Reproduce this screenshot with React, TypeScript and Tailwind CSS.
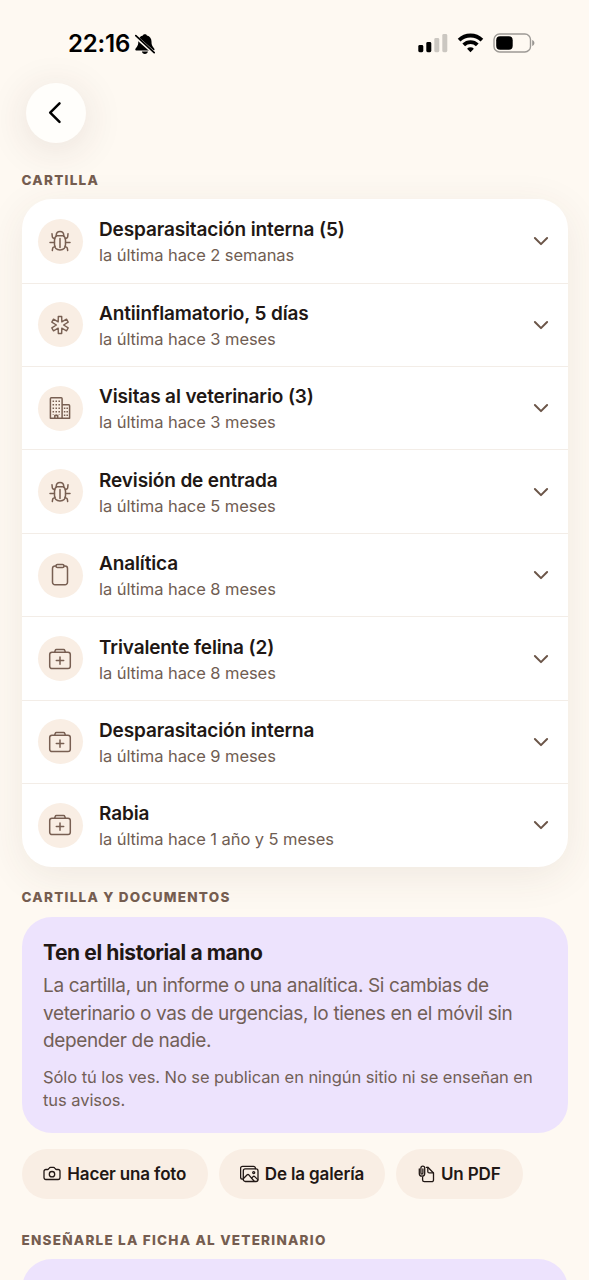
import type { ReactNode } from "react";

const stroke = {
  fill: "none",
  stroke: "currentColor",
  strokeLinecap: "round",
  strokeLinejoin: "round",
} as const;

function Bug() {
  return (
    <svg className="size-6" viewBox="0 0 24 24" strokeWidth="1.5" {...stroke}>
      <path d="M8.200 6.700C8.200 4.200 9.600 2.600 12 2.600s3.800 1.600 3.800 4.100" />
      <path d="M9 6.700h6q2.500 1.300 2.500 4.200v4.600c0 3.400-2.200 5.400-5.500 5.400s-5.500-2-5.500-5.400v-4.600q0-2.900 2.500-4.200Z" />
      <path d="M12 9.400v9M2 13.500h4.400M17.600 13.500h4.400M4 4.800l.3 3q.1.900.9 1.200l1.600.6M20 4.800l-.3 3q-.1.900-.9 1.200l-1.600.6M4.300 21.500l.4-2.300q.2-.8.900-1.100l1.500-.8M19.700 21.500l-.4-2.300q-.2-.8-.9-1.100l-1.500-.8" />
    </svg>
  );
}

function Asterisk() {
  return (
    <svg className="size-6" viewBox="-12 -12 24 24" strokeWidth="1.400" {...stroke}>
      <path d="M-1.700-8.500H1.700L1.800-3.120 6.500-5.800 8.200-2.800 3.600 0 8.200 2.800 6.500 5.800 1.800 3.120 1.700 8.500H-1.700L-1.800 3.120-6.500 5.800-8.200 2.800-3.600 0-8.200-2.800-6.500-5.800-1.800-3.120Z" />
    </svg>
  );
}

function Building() {
  return (
    <svg className="size-6" viewBox="0 0 24 24" strokeWidth="1.500" {...stroke}>
      <path d="M2.400 22.200V2.700q0-.9.900-.9h9.900q.9 0 .9.900v19.500ZM14.100 8.800h6.600q.9 0 .9.900v12.500h-7.500M6.800 22v-2.600h2.900V22" />
      <path
        strokeWidth="1.500"
        strokeLinecap="butt"
        strokeDasharray="1.500 2"
        d="M5.300 4.500v14.500M8.250 4.500v14.500M11.200 4.500v14.500M16.600 11.500v9.500M19.200 11.500v9.500"
      />
    </svg>
  );
}

function Clipboard() {
  return (
    <svg className="size-6" viewBox="0 0 24 24" strokeWidth="1.500" {...stroke}>
      <path d="M8.200 2.900H7A2.500 2.500 0 0 0 4.500 5.400v13.900A2.500 2.500 0 0 0 7 21.800h10a2.500 2.500 0 0 0 2.500-2.500V5.400A2.500 2.500 0 0 0 17 2.900h-1.200" />
      <rect x="8" y="1.600" width="8" height="3" rx="1.400" />
    </svg>
  );
}

function Medkit() {
  return (
    <svg className="size-6" viewBox="0 0 24 24" strokeWidth="1.500" {...stroke}>
      <rect x="1.700" y="5.300" width="20.600" height="16.300" rx="2.300" />
      <path d="M6.700 5.200l.5-1.700q.3-.9 1.200-.9h7.200q.9 0 1.200.9l.5 1.700M12 9.900v7.400M8.300 13.600h7.400" />
    </svg>
  );
}

function Camera() {
  return (
    <svg className="h-[16px] w-[18px]" viewBox="0 0 18 16" strokeWidth="1.300" {...stroke}>
      <path d="M2.900 3.500h1.700q.5 0 .8-.4l.8-1q.5-.7 1.300-.7h3q.8 0 1.300.7l.8 1q.3.400.8.400h1.700a1.900 1.900 0 0 1 1.900 1.900v6.200a1.900 1.900 0 0 1-1.900 1.900H2.900A1.900 1.900 0 0 1 1 11.600V5.400a1.900 1.900 0 0 1 1.900-1.900Z" />
      <circle cx="9" cy="8.200" r="2.700" />
    </svg>
  );
}

function Gallery() {
  return (
    <svg className="h-[18px] w-[19px]" viewBox="0.5 0 19 18" strokeWidth="1.300" {...stroke}>
      <path d="M3.600 14.200H3A1.900 1.900 0 0 1 1.100 12.300V3.200A1.900 1.900 0 0 1 3 1.300h11a1.900 1.900 0 0 1 1.900 1.900v.5" />
      <rect x="3.800" y="3.900" width="14.700" height="12.600" rx="2" />
      <path d="M4 13.500l3.700-3.700q.8-.7 1.600 0l5.200 6.200M12 13.200l1.600-1.600q.8-.7 1.600 0l3.100 3" />
      <circle cx="14.200" cy="7.600" r="1" />
    </svg>
  );
}

function PaperclipDoc() {
  return (
    <svg className="h-[18px] w-[17px]" viewBox="0 0 17 18" strokeWidth="1.300" {...stroke}>
      <path d="M4.600 12.200v2.700a1.800 1.800 0 0 0 1.800 1.800h7.300a1.800 1.800 0 0 0 1.800-1.800V8L9.900 2.300H8.300" />
      <path d="M9.800 2.500v3.900q0 1.500 1.500 1.500h4" />
      <path d="M1.300 4v4.400a2.700 2.700 0 0 0 5.400 0V3.100a1.900 1.900 0 0 0-3.800 0v5a1 1 0 0 0 2 0V4" />
    </svg>
  );
}

function Chevron() {
  return (
    <svg className="h-[10px] w-[16px]" viewBox="0 0 16 10" strokeWidth="2" {...stroke}>
      <path d="M1.900 2 8 8.100 14.100 2" />
    </svg>
  );
}

function StatusBar() {
  return (
    <div className="flex h-[82.500px] items-start justify-between pl-[68px] pr-[53px] pt-[32px] text-black">
      <div className="flex items-center gap-[4px]">
        <span className="text-[24px] font-semibold leading-[24px] tracking-[-0.150px]">22:16</span>
        <svg className="h-[22px] w-[22px]" viewBox="0 0 22 22">
          <path
            fill="currentColor"
            d="M10.900 1.300c-1 0-1.800.5-2 1.200C5.900 3.300 4.300 5.600 4.300 8.500c0 3.400-.6 4.300-1.900 5.900-.9 1-1.100 1.400-1.100 2 0 .7.500 1.100 1.300 1.100h16.600c.8 0 1.300-.4 1.300-1.100 0-.6-.2-1-1.100-2-1.300-1.600-1.900-2.500-1.900-5.900 0-2.900-1.600-5.200-4.600-6-.2-.7-1-1.200-2-1.200ZM7.900 18.600c.2 1.400 1.400 2.500 3 2.500s2.800-1.100 3-2.500Z"
          />
          <path d="M1.500 3.500 20 20" stroke="#fef9f2" strokeWidth="3.600" />
          <path d="M1.800 2.700 20.200 19.700" stroke="currentColor" strokeWidth="1.700" strokeLinecap="round" />
        </svg>
      </div>
      <div className="flex items-center pt-px">
        <svg className="h-[20px] w-[30px]" viewBox="0 0 30 20" fill="currentColor">
          <rect x="0.300" y="12" width="5" height="7.200" rx="1.400" />
          <rect x="8.300" y="9" width="5" height="10.200" rx="1.400" />
          <rect x="16.300" y="5" width="5" height="14.200" rx="1.400" opacity="0.200" />
          <rect x="24.300" y="1" width="5" height="18.200" rx="1.400" opacity="0.200" />
        </svg>
        <svg className="ml-[9px] h-[20px] w-[27px]" viewBox="0 0 27 20" fill="none" stroke="currentColor" strokeWidth="3.800">
          <path d="M2.100 7.200a16.200 16.200 0 0 1 22.800 0" />
          <path d="M6.700 11.900a9.600 9.600 0 0 1 13.600 0" />
          <path d="M13.500 19.200l-3.400-3.500a4.800 4.800 0 0 1 6.800 0Z" fill="currentColor" stroke="none" />
        </svg>
        <svg className="ml-[9px] h-[20px] w-[43px]" viewBox="0 0 43 20">
          <rect x="1" y="1" width="36.500" height="18" rx="5.600" fill="none" stroke="#000" strokeOpacity="0.380" strokeWidth="1.400" />
          <rect x="3.200" y="3.300" width="16.500" height="13.400" rx="3.900" fill="#000" />
          <path d="M39.200 7v6c1.400-.5 2.200-1.600 2.200-3s-.8-2.500-2.200-3Z" fill="#000" fillOpacity="0.400" />
        </svg>
      </div>
    </div>
  );
}

type Entry = { icon: ReactNode; title: string; detail: string };

const entries: Entry[] = [
  { icon: <Bug />, title: "Desparasitación interna (5)", detail: "la última hace 2 semanas" },
  { icon: <Asterisk />, title: "Antiinflamatorio, 5 días", detail: "la última hace 3 meses" },
  { icon: <Building />, title: "Visitas al veterinario (3)", detail: "la última hace 3 meses" },
  { icon: <Bug />, title: "Revisión de entrada", detail: "la última hace 5 meses" },
  { icon: <Clipboard />, title: "Analítica", detail: "la última hace 8 meses" },
  { icon: <Medkit />, title: "Trivalente felina (2)", detail: "la última hace 8 meses" },
  { icon: <Medkit />, title: "Desparasitación interna", detail: "la última hace 9 meses" },
  { icon: <Medkit />, title: "Rabia", detail: "la última hace 1 año y 5 meses" },
];

function EntryRow({ icon, title, detail }: Entry) {
  return (
    <li className="flex items-center border-t border-[#f3ede7] pl-[16px] pr-[18.500px] first:border-transparent">
      <span className="flex size-[45px] shrink-0 items-center justify-center rounded-full bg-[#f9eee4] text-[#785f52]">
        {icon}
      </span>
      <div className="ml-[16.500px] flex-1 pt-[3px]">
        <p className="whitespace-nowrap text-[19px] font-semibold leading-[26px] tracking-[-0.130px] text-[#211714]">{title}</p>
        <p className="whitespace-nowrap text-[16.500px] leading-[25px] tracking-[-0.070px] text-[#705d52]">{detail}</p>
      </div>
      <span className="text-[#6b5548]">
        <Chevron />
      </span>
    </li>
  );
}

function SectionLabel({ children }: { children: ReactNode }) {
  return (
    <h2 className="whitespace-nowrap text-[13.500px] font-extrabold leading-[18px] tracking-[1.240px] text-[#755d50]">{children}</h2>
  );
}

function PillButton({ icon, label, size }: { icon: ReactNode; label: string; size: string }) {
  return (
    <button className={`flex h-[50px] items-center justify-center gap-[6px] rounded-full bg-[#f9eee4] text-[#211714] ${size}`}>
      {icon}
      <span className="whitespace-nowrap text-[17px] font-semibold leading-[22px] tracking-[-0.140px]">{label}</span>
    </button>
  );
}

export default function App() {
  return (
    <div className="flex h-[1280px] w-[589px] flex-col overflow-hidden bg-[#fef9f2] font-['Inter','Liberation_Sans',sans-serif]">
      <header className="relative z-10 h-[155px] shrink-0">
        <StatusBar />
        <button
          aria-label="Atrás"
          className="ml-[26px] flex size-[60px] items-center justify-center rounded-full bg-[#fffefb] text-black shadow-[0_6px_40px_rgba(70,45,40,0.120)]"
        >
          <svg className="h-[24px] w-[16px]" viewBox="0 0 16 24" strokeWidth="2.500" {...stroke}>
            <path d="M11.500 2.300 2.200 11.600 11.500 20.900" />
          </svg>
        </button>
      </header>

      <main className="flex flex-1 flex-col overflow-hidden px-[21.500px] pt-[16px]">
        <SectionLabel>CARTILLA</SectionLabel>
        <ul className="mt-[10.100px] grid h-[667.500px] shrink-0 grid-rows-8 rounded-[30px] bg-white shadow-[0_9px_40px_rgba(80,60,45,0.085)]">
          {entries.map((entry) => (
            <EntryRow key={entry.title} {...entry} />
          ))}
        </ul>

        <div className="mt-[21.500px]">
          <SectionLabel>CARTILLA Y DOCUMENTOS</SectionLabel>
        </div>
        <section className="mt-[11px] h-[215.500px] shrink-0 rounded-[30px] bg-[#ede3fd] px-[21.500px] pt-[22.500px]">
          <h3 className="text-[21px] font-bold leading-[26px] tracking-[-0.400px] text-[#211714]">Ten el historial a mano</h3>
          <p className="mt-[6.300px] whitespace-nowrap text-[19px] leading-[27.700px] tracking-[-0.360px] text-[#725f57]">
            La cartilla, un informe o una analítica. Si cambias de
            <br />
            veterinario o vas de urgencias, lo tienes en el móvil sin
            <br />
            depender de nadie.
          </p>
          <p className="mt-[11px] whitespace-nowrap text-[16.500px] leading-[22.500px] tracking-[-0.070px] text-[#725f57]">
            Sólo tú los ves. No se publican en ningún sitio ni se enseñan en
            <br />
            tus avisos.
          </p>
        </section>

        <div className="mt-[16.300px] flex gap-[11px]">
          <PillButton icon={<Camera />} label="Hacer una foto" size="w-[186.500px]" />
          <PillButton icon={<Gallery />} label="De la galería" size="w-[166px]" />
          <PillButton icon={<PaperclipDoc />} label="Un PDF" size="w-[126.500px]" />
        </div>

        <div className="mt-[32px]">
          <SectionLabel>ENSEÑARLE LA FICHA AL VETERINARIO</SectionLabel>
        </div>
        <section className="mt-[10.300px] h-[216px] shrink-0 rounded-[30px] bg-[#ede3fd]" />
      </main>
    </div>
  );
}
